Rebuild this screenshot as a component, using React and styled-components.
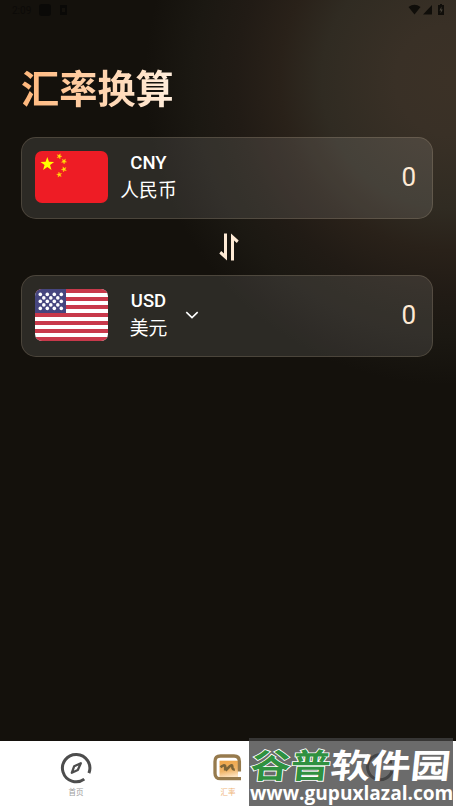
import React from 'react'
import styled, { createGlobalStyle } from 'styled-components'

const currencies = [
  { code: 'CNY', name: '人民币', amount: '0', flag: 'cn' },
  { code: 'USD', name: '美元', amount: '0', flag: 'us', selectable: true },
]

const smallStars = [
  [24.3, 5.3],
  [29, 10.3],
  [29, 18.3],
  [24.3, 23.7],
]

const starPath = 'M0-1L.235-.324.951-.309.38.124.588.809 0 .4-.588.809-.38.124-.951-.309-.235-.324Z'

const ChinaFlag = () => (
  <FlagSvg viewBox="0 0 73 52">
    <rect width="73" height="52" fill="#ee1c25" />
    <path d={starPath} fill="#ff0" transform="translate(12.3 13.2) scale(7.2)" />
    {smallStars.map(([x, y], i) => (
      <path key={i} d={starPath} fill="#ffe00a" stroke="#ffc00a" strokeWidth=".15" transform={`translate(${x} ${y}) rotate(${20 + i * 14}) scale(2.7)`} />
    ))}
  </FlagSvg>
)

const UsaFlag = () => (
  <FlagSvg viewBox="0 0 73 52">
    <rect width="73" height="52" fill="#fff" />
    {[0, 1, 2, 3, 4, 5, 6].map(i => (
      <rect key={i} y={i * 8} width="73" height="4" fill="#c8394b" />
    ))}
    <rect width="31" height="24" fill="#46467f" />
    {[0, 1, 2, 3, 4].map(row =>
      [0, 1, 2, 3].slice(0, row % 2 ? 3 : 4).map(col => (
        <circle key={`${row}-${col}`} cx={5.3 + col * 7 + (row % 2 ? 3.5 : 0)} cy={5.4 + row * 3.5} r="1.8" fill="#fff" />
      ))
    )}
  </FlagSvg>
)

const CurrencyCard = ({ code, name, amount, flag, selectable }) => (
  <Card>
    <Flag>{flag === 'cn' ? <ChinaFlag /> : <UsaFlag />}</Flag>
    <Labels>
      <Code>{code}</Code>
      <Name>{name}</Name>
    </Labels>
    {selectable && (
      <Chevron viewBox="0 0 14 8">
        <path d="M1.3 1.2L7 6.6 12.7 1.2" fill="none" stroke="#fff" strokeWidth="1.6" />
      </Chevron>
    )}
    <Amount>{amount}</Amount>
  </Card>
)

const App = () => (
  <>
    <GlobalStyle />
    <Screen>
      <StatusBar>
        <Time>2:09</Time>
        <svg width="60" height="14" viewBox="0 0 60 14" fill="#0a0907">
          <rect x="0" y="1" width="12" height="12" rx="3" />
          <path d="M21 2h7v10h-7zM23 5v4h3V5z" fillRule="evenodd" />
        </svg>
        <StatusIcons width="38" height="12" viewBox="0 0 38 12" fill="#100e0a">
          <path d="M.5 3Q6.500-1.500 12.500 3L6.500 10.500Z" />
          <path d="M15 10.500L24 1V10.500Z" />
          <path d="M30 1h2V0h2v1h2v10h-6z" />
          <path d="M33.500 2.500L31.500 6.500H33L32.500 9.500 34.800 5.500H33.300Z" fill="#49443a" />
        </StatusIcons>
      </StatusBar>
      <Title>汇率换算</Title>
      <CurrencyCard {...currencies[0]} />
      <SwapRow>
        <svg width="20" height="28" viewBox="0 0 20 28" fill="#feead5">
          <path d="M5 .5H8V27.500L.3 20.600 2.200 18 5 20.500Z" />
          <path d="M15 27.500H12V.5L19.700 7.400 17.800 10 15 7.500Z" />
        </svg>
      </SwapRow>
      <CurrencyCard {...currencies[1]} />
      <TabBar>
        <Tab>
          <svg width="32" height="32" viewBox="0 0 32 32" fill="none" stroke="#4d4d4d">
            <path d="M24.300 27.100A13.700 13.700 0 1 1 28.900 21.100" strokeWidth="3" />
            <path d="M20.800 11.200L17.800 18 11.800 20.800 14.200 14.200Z" strokeWidth="2.3" strokeLinejoin="round" />
          </svg>
          <TabLabel $color="#9c9c9c">首页</TabLabel>
        </Tab>
        <Tab>
          <svg width="32" height="32" viewBox="0 0 32 32" fill="none">
            <defs>
              <linearGradient id="rate" x1="0.2" y1="0" x2=".4" y2="1">
                <stop offset="0" stopColor="#efa547" />
                <stop offset=".6" stopColor="#efb468" />
                <stop offset="1" stopColor="#fde3c0" />
              </linearGradient>
            </defs>
            <rect x="7.500" y="8.700" width="18.500" height="17" fill="url(#rate)" />
            <path d="M29 26.700H8.500Q3 26.700 3 21.200V9.500Q3 4 8.500 4H22Q27.400 4 27.400 9.500V19.500" stroke="#967a4d" strokeWidth="3.300" />
            <path d="M8.500 15.200Q12 12.200 13.200 14.200V18.500M13.500 18.500L18 14Q20.300 12.500 20.300 14.500 20.300 18 22.800 17.500" stroke="#7c6438" strokeWidth="2.600" />
          </svg>
          <TabLabel $color="#efb77d">汇率</TabLabel>
        </Tab>
        <Tab>
          <svg width="32" height="32" viewBox="0 0 32 32" fill="none" stroke="#4d4d4d" strokeWidth="3">
            <path d="M20.500 3.500A12.500 12.500 0 1 0 28 19" />
            <path d="M21 10H28" />
          </svg>
        </Tab>
      </TabBar>
      <Watermark>
        <SiteName>
          <Green>谷普</Green>软件园
        </SiteName>
        <SiteUrl>www.gupuxlazal.com</SiteUrl>
      </Watermark>
    </Screen>
  </>
)

export default App

const GlobalStyle = createGlobalStyle`
  body {
    margin: 0;
    background: #14110c;
  }

  * {
    box-sizing: border-box;
  }

  svg {
    display: block;
  }
`

const Screen = styled.main`
  position: relative;
  display: flex;
  flex-direction: column;
  width: 456px;
  height: 810px;
  overflow: hidden;
  font-family: Roboto, 'Noto Sans CJK SC', sans-serif;
  color: #fff;
  background:
    radial-gradient(circle 305px at 450px 80px, #3b3126 0, #393026 18%, #302b22 42%, #292119 56%, #211b15 70%, #1b1812 84%, rgba(20, 17, 12, 0) 100%),
    #14110c;
`

const StatusBar = styled.header`
  display: flex;
  align-items: center;
  height: 20px;
  padding: 0 10px 0 12px;
`

const Time = styled.span`
  width: 27px;
  font-size: 10px;
  color: #0c0a08;
`

const StatusIcons = styled.svg`
  margin-left: auto;
`

const Title = styled.h1`
  align-self: flex-start;
  margin: 42px 0 0 21px;
  height: 75px;
  line-height: 57px;
  font-size: 38.2px;
  font-weight: 700;
  color: transparent;
  background: linear-gradient(90deg, #ffb77b, #ffeedd);
  background-clip: text;
`

const Card = styled.section`
  display: flex;
  align-items: center;
  flex: none;
  width: 412px;
  height: 82px;
  margin-left: 21px;
  padding: 0 16px 0 13px;
  border: 1px solid rgba(255, 225, 190, 0.15);
  border-radius: 15px;
  background: rgba(255, 255, 255, 0.105);
`

const Flag = styled.div`
  width: 73px;
  height: 52px;
  margin-bottom: 2px;
  border-radius: 7px;
  overflow: hidden;
`

const FlagSvg = styled.svg`
  width: 73px;
  height: 52px;
`

const Labels = styled.div`
  display: flex;
  flex-direction: column;
  align-items: center;
  width: 81px;
  margin-bottom: 2px;
`

const Code = styled.span`
  line-height: 26px;
  font-size: 18.5px;
  font-weight: 500;
`

const Name = styled.span`
  height: 28px;
  line-height: 30px;
  font-size: 18.8px;
`

const Chevron = styled.svg`
  width: 14px;
  height: 8px;
  margin: 0 0 2px -4px;
`

const Amount = styled.span`
  margin-left: auto;
  margin-bottom: 2px;
  font-size: 26px;
  color: #feead5;
`

const SwapRow = styled.div`
  display: flex;
  justify-content: center;
  align-items: center;
  flex: none;
  height: 56px;
  padding: 0 0 1px 2px;
`

const TabBar = styled.nav`
  display: grid;
  grid-template-columns: repeat(3, 1fr);
  height: 69px;
  margin-top: auto;
  background: #fff;
`

const Tab = styled.div`
  display: flex;
  flex-direction: column;
  align-items: center;
  padding-top: 11px;
`

const TabLabel = styled.span`
  line-height: 17px;
  font-size: 7.5px;
  font-weight: 400;
  color: ${({ $color }) => $color};
`

const Watermark = styled.aside`
  position: absolute;
  left: 249px;
  top: 738px;
  width: 204px;
  height: 68px;
  background: rgba(65, 65, 65, 0.78);
  white-space: nowrap;
`

const SiteName = styled.div`
  height: 44px;
  padding-left: 2px;
  line-height: 44px;
  font-family: 'Noto Sans CJK SC', sans-serif;
  font-size: 40px;
  font-weight: 700;
  transform: translateY(4px) scaleY(0.84) skewX(-5deg);
`

const Green = styled.span`
  color: #2f9140;
  -webkit-text-stroke: 2px #fff;
  paint-order: stroke fill;
`

const SiteUrl = styled.div`
  padding-left: 1px;
  line-height: 22px;
  font-family: 'Open Sans', sans-serif;
  font-size: 19.1px;
  font-weight: 700;
`
